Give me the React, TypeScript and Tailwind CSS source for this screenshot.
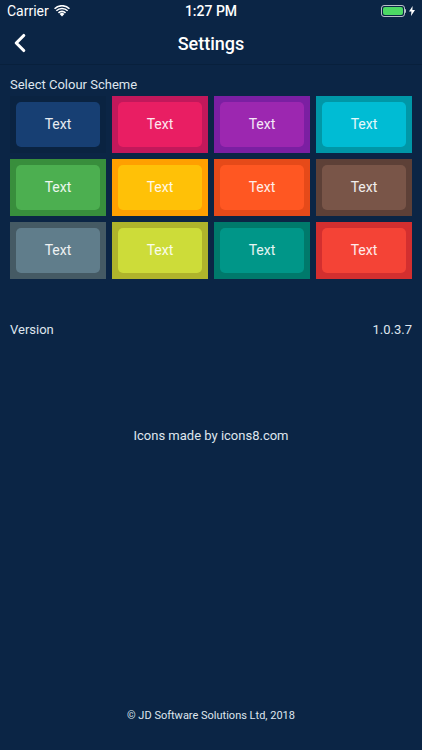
import { ChevronLeft } from "lucide-react"

type Scheme = {
  outer: string
  inner: string
}

const schemes: Scheme[] = [
  { outer: "bg-[#0a2341]", inner: "bg-[#173f73]" },
  { outer: "bg-[#c2185b]", inner: "bg-[#e91e63]" },
  { outer: "bg-[#7b1fa2]", inner: "bg-[#9c27b0]" },
  { outer: "bg-[#0097a7]", inner: "bg-[#00bcd4]" },
  { outer: "bg-[#388e3c]", inner: "bg-[#4caf50]" },
  { outer: "bg-[#ffa000]", inner: "bg-[#ffc107]" },
  { outer: "bg-[#e64a19]", inner: "bg-[#ff5722]" },
  { outer: "bg-[#5d4037]", inner: "bg-[#795548]" },
  { outer: "bg-[#455a64]", inner: "bg-[#607d8b]" },
  { outer: "bg-[#afb42b]", inner: "bg-[#cddc39]" },
  { outer: "bg-[#00796b]", inner: "bg-[#009688]" },
  { outer: "bg-[#d32f2f]", inner: "bg-[#f44336]" },
]

function Wifi() {
  return (
    <svg width="16" height="12" viewBox="0 0 16 12" fill="white">
      <path d="M8 11.5 5.6 9a3.4 3.4 0 0 1 4.8 0Z" />
      <path d="M3.9 7.3a5.8 5.8 0 0 1 8.2 0l-1.1 1.1a4.2 4.2 0 0 0-6 0Z" />
      <path d="M1.8 5.2a8.8 8.8 0 0 1 12.4 0l-1.1 1.1a7.2 7.2 0 0 0-10.2 0Z" />
      <path d="M0 3.2a11.4 11.4 0 0 1 16 0l-1.1 1.1a9.8 9.8 0 0 0-13.8 0Z" />
    </svg>
  )
}

function Battery() {
  return (
    <div className="flex items-center gap-[3px]">
      <div className="flex items-center">
        <div className="w-[24px] h-[12px] rounded-[3px] border border-white/70 p-[1px]">
          <div className="w-full h-full rounded-[2px] bg-[#4cd964]" />
        </div>
        <div className="w-[1.5px] h-[4px] bg-white/70 rounded-r" />
      </div>
      <svg width="6" height="10" viewBox="0 0 6 10" fill="white">
        <path d="M3.6 0 0 5.6h2.4L2 10l4-6H3.4Z" />
      </svg>
    </div>
  )
}

export default function App() {
  return (
    <div
      className="w-[422px] h-[750px] bg-[#0b2545] text-white flex flex-col overflow-hidden"
      style={{ fontFamily: 'Roboto, "Liberation Sans", sans-serif' }}
    >
      {/* status bar */}
      <div className="h-[22px] flex items-center justify-between px-[7px] text-[14px] relative">
        <div className="flex items-center gap-[5px]">
          <span>Carrier</span>
          <Wifi />
        </div>
        <span className="absolute left-1/2 -translate-x-1/2 font-medium">1:27 PM</span>
        <Battery />
      </div>

      {/* nav bar */}
      <div className="h-[43px] flex items-center relative border-b border-[#08203c]">
        <ChevronLeft className="w-[30px] h-[30px] ml-[5px] text-white" strokeWidth={2.5} />
        <span className="absolute left-1/2 -translate-x-1/2 text-[18px] font-medium">Settings</span>
      </div>

      <div className="px-[10px] pt-[10px] text-[13px] text-[#dfe6ee]">Select Colour Scheme</div>

      <div className="grid grid-cols-4 gap-[6px] px-[10px] pt-[1px]">
        {schemes.map((s, i) => (
          <div key={i} className={`${s.outer} h-[57px] p-[6px]`}>
            <div className={`${s.inner} h-full rounded-[5px] flex items-center justify-center text-[14px] text-white/90`}>
              Text
            </div>
          </div>
        ))}
      </div>

      <div className="flex justify-between px-[10px] mt-[41px] text-[13px] text-[#dfe6ee]">
        <span>Version</span>
        <span>1.0.3.7</span>
      </div>

      <div className="text-center mt-[87px] text-[13px] text-[#dfe6ee]">Icons made by icons8.com</div>

      <div className="flex-1" />
      <div className="text-center text-[11px] text-[#dfe6ee] pb-[26px]">© JD Software Solutions Ltd, 2018</div>
    </div>
  )
}
